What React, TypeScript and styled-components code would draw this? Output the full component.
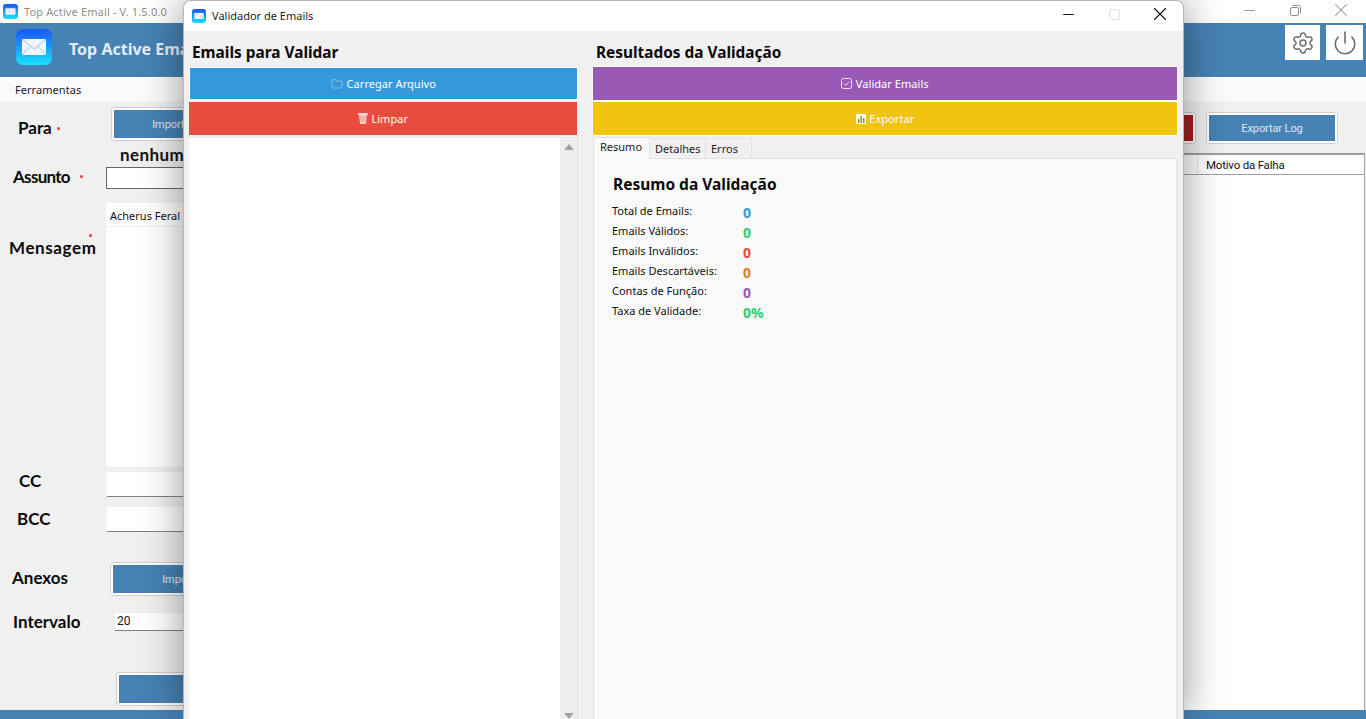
import React from 'react';
import styled, {createGlobalStyle} from 'styled-components';
import {Folder, Minus, Power, Settings, Square, X} from 'lucide-react';

const UI_FONT = `"Noto Sans", "Open Sans", sans-serif`;
const FORM_FONT = `Lato, "Open Sans", sans-serif`;
const STEEL = '#4682b4';

const GlobalStyle = createGlobalStyle`
    html, body {
        margin: 0;
        height: 100%;
        overflow: hidden;
        background: #f0f0f0;
    }
    * {
        box-sizing: border-box;
    }
`;

const Desktop = styled.div`
    position: relative;
    width: 1366px;
    height: 719px;
    overflow: hidden;
    font-family: ${UI_FONT};
    font-size: 11px;
    color: #111;
`;

//
// Main window

const MainWindow = styled.div`
    display: flex;
    flex-direction: column;
    height: 100%;
`;

const MainTitleBar = styled.div`
    height: 23px;
    flex: none;
    display: flex;
    align-items: center;
    padding-left: 3px;
    background: #fff;
    color: #8f8f8f;
`;

const MainTitle = styled.span`
    margin-left: 6px;
    letter-spacing: 0.14px;
`;

const WindowControls = styled.div<{$right: number; $color: string}>`
    margin-left: auto;
    margin-top: -3px;
    display: flex;
    align-items: center;
    padding-right: ${(p) => p.$right}px;
    color: ${(p) => p.$color};
`;

const WindowControl = styled.span`
    width: 46px;
    display: flex;
    align-items: center;
    justify-content: center;
`;

const Header = styled.div`
    height: 54px;
    flex: none;
    display: flex;
    align-items: flex-start;
    padding: 2px 3px 0 16px;
    background: ${STEEL};
`;

const LogoSlot = styled.div`
    margin-top: 4px;
    line-height: 0;
`;

const Brand = styled.span`
    margin: 13px 0 0 17px;
    color: #e4edf5;
    font-size: 16px;
    font-weight: 700;
    white-space: nowrap;
`;

const HeaderButton = styled.button<{$width: number; $first?: boolean}>`
    width: ${(p) => p.$width}px;
    height: 35px;
    margin-left: ${(p) => (p.$first ? 'auto' : '6px')};
    padding: 0;
    display: flex;
    align-items: center;
    justify-content: center;
    border: none;
    background: #fff;
    color: #6e6e6e;
`;

const MenuBar = styled.div`
    height: 24px;
    flex: none;
    display: flex;
    align-items: center;
    padding-left: 15px;
    background: #fbfbfb;
    color: #1a1a2a;
    letter-spacing: 0.05px;
`;

const Content = styled.div`
    flex: 1;
    min-height: 0;
    display: grid;
    grid-template-columns: 700px 1fr;
    background: #f0f0f0;
`;

const Form = styled.div`
    display: grid;
    grid-template-columns: 106px 1fr;
    align-content: start;
    padding-top: 6px;
`;

const FieldLabel = styled.div<{$indent: number; $top?: number; $gap?: number; $height?: number; $spacing?: number}>`
    position: relative;
    margin-top: ${(p) => p.$gap ?? 0}px;
    padding-left: ${(p) => p.$indent}px;
    padding-top: ${(p) => p.$top ?? 0}px;
    height: ${(p) => (p.$height ? `${p.$height}px` : 'auto')};
    font-family: ${FORM_FONT};
    font-size: 17px;
    font-weight: 700;
    line-height: 20px;
    letter-spacing: ${(p) => p.$spacing ?? 0}px;
    color: #0a0a0a;
    white-space: nowrap;
`;

const Required = styled.span<{$x: number; $y: number}>`
    position: absolute;
    left: ${(p) => p.$x}px;
    top: ${(p) => p.$y}px;
    width: 3px;
    height: 3px;
    border-radius: 50%;
    background: #ef3a3a;
`;

const Cell = styled.div<{$x?: number; $gap?: number}>`
    margin-left: ${(p) => p.$x ?? 0}px;
    margin-top: ${(p) => p.$gap ?? 0}px;
`;

const FlatButton = styled.button<{$width: number; $height?: number; $bg?: string}>`
    display: block;
    width: ${(p) => p.$width}px;
    height: ${(p) => p.$height ?? 34}px;
    padding: 0;
    border: 3px solid #fff;
    outline: 1px solid #cfcfcf;
    outline-offset: -1px;
    border-radius: 3px;
    background: ${(p) => p.$bg ?? STEEL};
    background-clip: padding-box;
    color: #dfeaf3;
    font-family: Roboto, sans-serif;
    font-size: 11px;
    letter-spacing: -0.1px;
`;

const NoFile = styled.div`
    height: 26px;
    padding: 5px 0 0 14px;
    font-family: ${FORM_FONT};
    font-size: 17px;
    font-weight: 700;
    line-height: 18px;
    letter-spacing: 0.4px;
`;

const BorderedInput = styled.div`
    height: 22px;
    background: #fff;
    border: 1px solid #666;
`;

const FontBar = styled.div`
    height: 24px;
    padding: 5px 0 0 4px;
    background: #fff;
    border-bottom: 1px solid #eee;
    line-height: 16px;
`;

const Editor = styled.div`
    height: 240px;
    background: #fff;
`;

const LineInput = styled.div<{$height: number}>`
    height: ${(p) => p.$height}px;
    padding-left: 2px;
    background: #fff;
    border-bottom: 1px solid #808080;
    font-family: Roboto, sans-serif;
    font-size: 12px;
    line-height: 17px;
    color: #111827;
`;

const LogPanel = styled.div`
    display: flex;
    flex-direction: column;
    padding: 11px 1px 0 0;
    min-width: 0;
`;

const LogToolbar = styled.div`
    display: flex;
    justify-content: flex-end;
    gap: 10px;
    padding-right: 27px;
`;

const LogTable = styled.div`
    flex: 1;
    margin-top: 9px;
    background: #fff;
    border: 1px solid #a0a0a0;
    border-top-width: 2px;
    border-bottom: none;
`;

const LogHeader = styled.div`
    height: 20px;
    display: flex;
    justify-content: flex-end;
    border-bottom: 1px solid #a0a0a0;
`;

const LogColumn = styled.div`
    width: 167px;
    padding: 1px 0 0 8px;
    border-left: 1px solid #e2e2e2;
    font-family: Roboto, sans-serif;
    font-size: 11.500px;
    line-height: 19px;
    letter-spacing: -0.2px;
    color: #10101f;
`;

const BottomBar = styled.div`
    height: 9px;
    flex: none;
    background: ${STEEL};
`;

//
// Validator dialog

const Dialog = styled.div`
    position: absolute;
    left: 183px;
    top: 0;
    width: 1001px;
    height: 719px;
    display: flex;
    flex-direction: column;
    border: 1px solid #b5b5b5;
    border-bottom: none;
    border-radius: 8px 8px 0 0;
    background: #f0f0f0;
    box-shadow: 0 0 42px rgba(0, 0, 0, 0.42);
    overflow: hidden;
`;

const DialogTitleBar = styled.div`
    height: 30px;
    flex: none;
    display: flex;
    align-items: center;
    padding: 0 0 1px 8px;
    background: #fff;
    color: #1c1c1c;
`;

const DialogTitle = styled.span`
    margin-left: 6px;
`;

const DialogBody = styled.div`
    flex: 1;
    min-height: 0;
    display: grid;
    grid-template-columns: 389px 584px;
    column-gap: 15px;
    padding: 0 6px 0 5px;
`;

const Column = styled.div`
    display: flex;
    flex-direction: column;
    min-height: 0;
`;

const Heading = styled.h2`
    height: 36px;
    margin: 0;
    padding: 12px 0 0 3px;
    font-size: 15.400px;
    font-weight: 700;
    line-height: 19px;
    color: #0a0a0a;
`;

const ActionButton = styled.button<{$bg: string; $flush?: boolean; $outset?: boolean}>`
    height: ${(p) => (p.$outset ? 35 : 33)}px;
    flex: none;
    margin: ${(p) => {
        if (p.$outset) return '0 -1px';
        return p.$flush ? '0 1px 2px 0' : '0 0 2px';
    }};
    padding: 0;
    display: flex;
    align-items: center;
    justify-content: center;
    gap: 3.500px;
    border: 1px solid ${(p) => (p.$flush ? p.$bg : '#fff')};
    background: ${(p) => p.$bg};
    color: #fff;
    font-family: ${UI_FONT};
    font-size: 11px;
    letter-spacing: 0.05px;

    &:first-of-type {
        margin-top: ${(p) => (p.$outset ? -1 : 0)}px;
    }
`;

const EmailsBox = styled.div`
    flex: 1;
    display: flex;
    justify-content: flex-end;
    background: #fff;
    border-top: 1px solid #e8e8e8;
`;

const ScrollBar = styled.div`
    width: 18px;
    display: flex;
    flex-direction: column;
    justify-content: space-between;
    align-items: center;
    padding: 6px 0 0;
    background: #eee;
    border-right: 1px solid #e2e2e2;
`;

const Arrow = styled.span<{$down?: boolean}>`
    width: 0;
    height: 0;
    border-left: 5px solid transparent;
    border-right: 5px solid transparent;
    ${(p) => (p.$down ? 'border-top: 6px solid #a3a3a3;' : 'border-bottom: 6px solid #a3a3a3;')}
`;

const TabStrip = styled.div`
    height: 22px;
    flex: none;
    display: flex;
    align-items: flex-end;
`;

const Tab = styled.div<{$active?: boolean; $width: number}>`
    position: relative;
    width: ${(p) => p.$width}px;
    height: ${(p) => (p.$active ? 22 : 20)}px;
    margin-bottom: ${(p) => (p.$active ? -1 : 0)}px;
    padding: ${(p) => (p.$active ? '0 0 0 6px' : '1px 0 0 5px')};
    background: ${(p) => (p.$active ? '#f9f9f9' : '#f0f0f0')};
    border: 1px solid #e2e2e2;
    border-left-width: ${(p) => (p.$active ? 1 : 0)}px;
    border-bottom: none;
    line-height: 17px;
    color: #1c1c1c;
`;

const TabPanel = styled.div`
    flex: 1;
    min-height: 0;
    padding: 14px 20px 0 18px;
    background: #f9f9f9;
    border: 1px solid #e2e2e2;
    border-bottom: none;
`;

const PanelTitle = styled.h3`
    margin: 0 0 8px 1px;
    font-size: 15.500px;
    font-weight: 700;
    line-height: 22px;
    color: #0a0a0a;
`;

const StatRow = styled.div`
    height: 20px;
    display: grid;
    grid-template-columns: 131px 1fr;
`;

const StatLabel = styled.span`
    line-height: 16px;
    color: #111;
`;

const StatValue = styled.span<{$color: string}>`
    font-size: 14px;
    font-weight: 700;
    line-height: 20px;
    color: ${(p) => p.$color};
`;

//
// Drawings

const MailIcon = ({size}: {size: number}) => (
    <svg width={size} height={size} viewBox="0 0 36 36" style={{flex: 'none'}}>
        <defs>
            <linearGradient id={`mail-${size}`} x1="0" y1="0" x2="0" y2="1">
                <stop offset="0" stopColor="#1b56f5" />
                <stop offset="1" stopColor="#19e2ff" />
            </linearGradient>
        </defs>
        <rect width="36" height="36" rx="7" fill={`url(#mail-${size})`} />
        <rect x="6" y="10" width="24" height="16" rx="1.5" fill="#f2f7ff" />
        <path d="M6.5 10.5 18 20l11.5-9.5M6.5 25.5 14.500 17M29.500 25.500 21.500 17" fill="none" stroke="#9fc4f2" strokeWidth="1" />
    </svg>
);

const RestoreIcon = () => (
    <svg width="11" height="11" viewBox="0 0 11 11" fill="none" stroke="currentColor" strokeWidth="1">
        <rect x="0.5" y="2.500" width="8" height="8" rx="1.500" />
        <path d="M2.500 0.500h6a2 2 0 0 1 2 2v6" />
    </svg>
);

const CheckBoxIcon = () => (
    <svg width="11" height="11" viewBox="0 0 11 11" fill="none" stroke="#f0e6f5" strokeWidth="1">
        <rect x="0.5" y="0.5" width="10" height="10" rx="2" />
        <path d="M2.800 5.500 4.700 7.500 8.300 3.400" />
    </svg>
);

const TrashIcon = () => (
    <svg width="10" height="11" viewBox="0 0 10 11">
        <path d="M0 0h10v2H9l-1 9H2L1 2H0z" fill="#fbd0cc" />
        <path d="M2 4h6M2.300 6h5.400M2.600 8h4.800" stroke="#e66a5c" strokeWidth="0.9" strokeDasharray="1 0.700" />
    </svg>
);

const ReportIcon = () => (
    <svg width="10" height="10" viewBox="0 0 10 10">
        <rect width="10" height="10" rx="1" fill="#fff" />
        <path d="M2 9V5h1.500v4zM4.500 9V2H6v7zM7 9V4h1.500v5z" fill="#a08a20" />
    </svg>
);

const stats = [
    {label: 'Total de Emails:', value: '0', color: '#3498db'},
    {label: 'Emails Válidos:', value: '0', color: '#2ecc71'},
    {label: 'Emails Inválidos:', value: '0', color: '#e74c3c'},
    {label: 'Emails Descartáveis:', value: '0', color: '#e67e22'},
    {label: 'Contas de Função:', value: '0', color: '#9b59b6'},
    {label: 'Taxa de Validade:', value: '0%', color: '#2ecc71'},
];

const App = () => (
    <Desktop>
        <GlobalStyle />
        <MainWindow>
            <MainTitleBar>
                <MailIcon size={15} />
                <MainTitle>Top Active Email - V. 1.5.0.0</MainTitle>
                <WindowControls $right={2} $color="#8f8f8f">
                    <WindowControl><Minus size={17} strokeWidth={1.3} /></WindowControl>
                    <WindowControl><RestoreIcon /></WindowControl>
                    <WindowControl><X size={22} strokeWidth={1.100} /></WindowControl>
                </WindowControls>
            </MainTitleBar>
            <Header>
                <LogoSlot>
                    <MailIcon size={36} />
                </LogoSlot>
                <Brand>Top Active Email</Brand>
                <HeaderButton $width={35} $first>
                    <Settings size={24} strokeWidth={1.5} />
                </HeaderButton>
                <HeaderButton $width={37}>
                    <Power size={26} strokeWidth={1.5} />
                </HeaderButton>
            </Header>
            <MenuBar>Ferramentas</MenuBar>
            <Content>
                <Form>
                    <FieldLabel $indent={18} $top={11}>
                        Para
                        <Required $x={57} $y={20} />
                    </FieldLabel>
                    <Cell $x={5}>
                        <FlatButton $width={124}>Importar</FlatButton>
                    </Cell>

                    <div />
                    <NoFile>nenhum</NoFile>

                    <FieldLabel $indent={13} $spacing={-0.7}>
                        Assunto
                        <Required $x={80} $y={8} />
                    </FieldLabel>
                    <BorderedInput />

                    <FieldLabel $indent={9} $top={35} $gap={14} $height={264} $spacing={0.6}>
                        Mensagem
                        <Required $x={89} $y={31} />
                    </FieldLabel>
                    <Cell $gap={14}>
                        <FontBar>Acherus Feral</FontBar>
                        <Editor />
                    </Cell>

                    <FieldLabel $indent={19} $gap={4} $height={26}>
                        CC
                    </FieldLabel>
                    <Cell $x={1} $gap={5}>
                        <LineInput $height={25} />
                    </Cell>

                    <FieldLabel $indent={17} $top={2} $gap={10} $height={25}>
                        BCC
                    </FieldLabel>
                    <Cell $x={1} $gap={10}>
                        <LineInput $height={25} />
                    </Cell>

                    <FieldLabel $indent={12} $top={6} $gap={30}>
                        Anexos
                    </FieldLabel>
                    <Cell $x={4} $gap={30}>
                        <FlatButton $width={146}>Importar</FlatButton>
                    </Cell>

                    <FieldLabel $indent={13} $gap={16} $height={19}>
                        Intervalo
                    </FieldLabel>
                    <Cell $x={9} $gap={17}>
                        <LineInput $height={18}>20</LineInput>
                    </Cell>

                    <div />
                    <Cell $x={10} $gap={41}>
                        <FlatButton $width={300} />
                    </Cell>
                </Form>
                <LogPanel>
                    <LogToolbar>
                        <FlatButton $width={120} $height={32} $bg="#a51d1d" />
                        <FlatButton $width={132} $height={32}>Exportar Log</FlatButton>
                    </LogToolbar>
                    <LogTable>
                        <LogHeader>
                            <LogColumn>Motivo da Falha</LogColumn>
                        </LogHeader>
                    </LogTable>
                </LogPanel>
            </Content>
            <BottomBar />
        </MainWindow>

        <Dialog>
            <DialogTitleBar>
                <MailIcon size={14} />
                <DialogTitle>Validador de Emails</DialogTitle>
                <WindowControls $right={0} $color="#111">
                    <WindowControl><Minus size={17} strokeWidth={1.400} /></WindowControl>
                    <WindowControl><Square size={13} strokeWidth={1} color="#c4c4c4" /></WindowControl>
                    <WindowControl><X size={22} strokeWidth={1.200} /></WindowControl>
                </WindowControls>
            </DialogTitleBar>
            <DialogBody>
                <Column>
                    <Heading>Emails para Validar</Heading>
                    <ActionButton $bg="#3498db">
                        <Folder size={12} strokeWidth={1} color="#cfe6f7" />
                        Carregar Arquivo
                    </ActionButton>
                    <ActionButton $bg="#e74c3c" $flush>
                        <TrashIcon />
                        Limpar
                    </ActionButton>
                    <EmailsBox>
                        <ScrollBar>
                            <Arrow />
                            <Arrow $down />
                        </ScrollBar>
                    </EmailsBox>
                </Column>
                <Column>
                    <Heading>Resultados da Validação</Heading>
                    <ActionButton $bg="#9b59b6" $outset>
                        <CheckBoxIcon />
                        Validar Emails
                    </ActionButton>
                    <ActionButton $bg="#f1c40f" $outset>
                        <ReportIcon />
                        Exportar
                    </ActionButton>
                    <TabStrip>
                        <Tab $active $width={57}>Resumo</Tab>
                        <Tab $width={56}>Detalhes</Tab>
                        <Tab $width={46}>Erros</Tab>
                    </TabStrip>
                    <TabPanel>
                        <PanelTitle>Resumo da Validação</PanelTitle>
                        {stats.map((s) => (
                            <StatRow key={s.label}>
                                <StatLabel>{s.label}</StatLabel>
                                <StatValue $color={s.color}>{s.value}</StatValue>
                            </StatRow>
                        ))}
                    </TabPanel>
                </Column>
            </DialogBody>
        </Dialog>
    </Desktop>
);

export default App;
